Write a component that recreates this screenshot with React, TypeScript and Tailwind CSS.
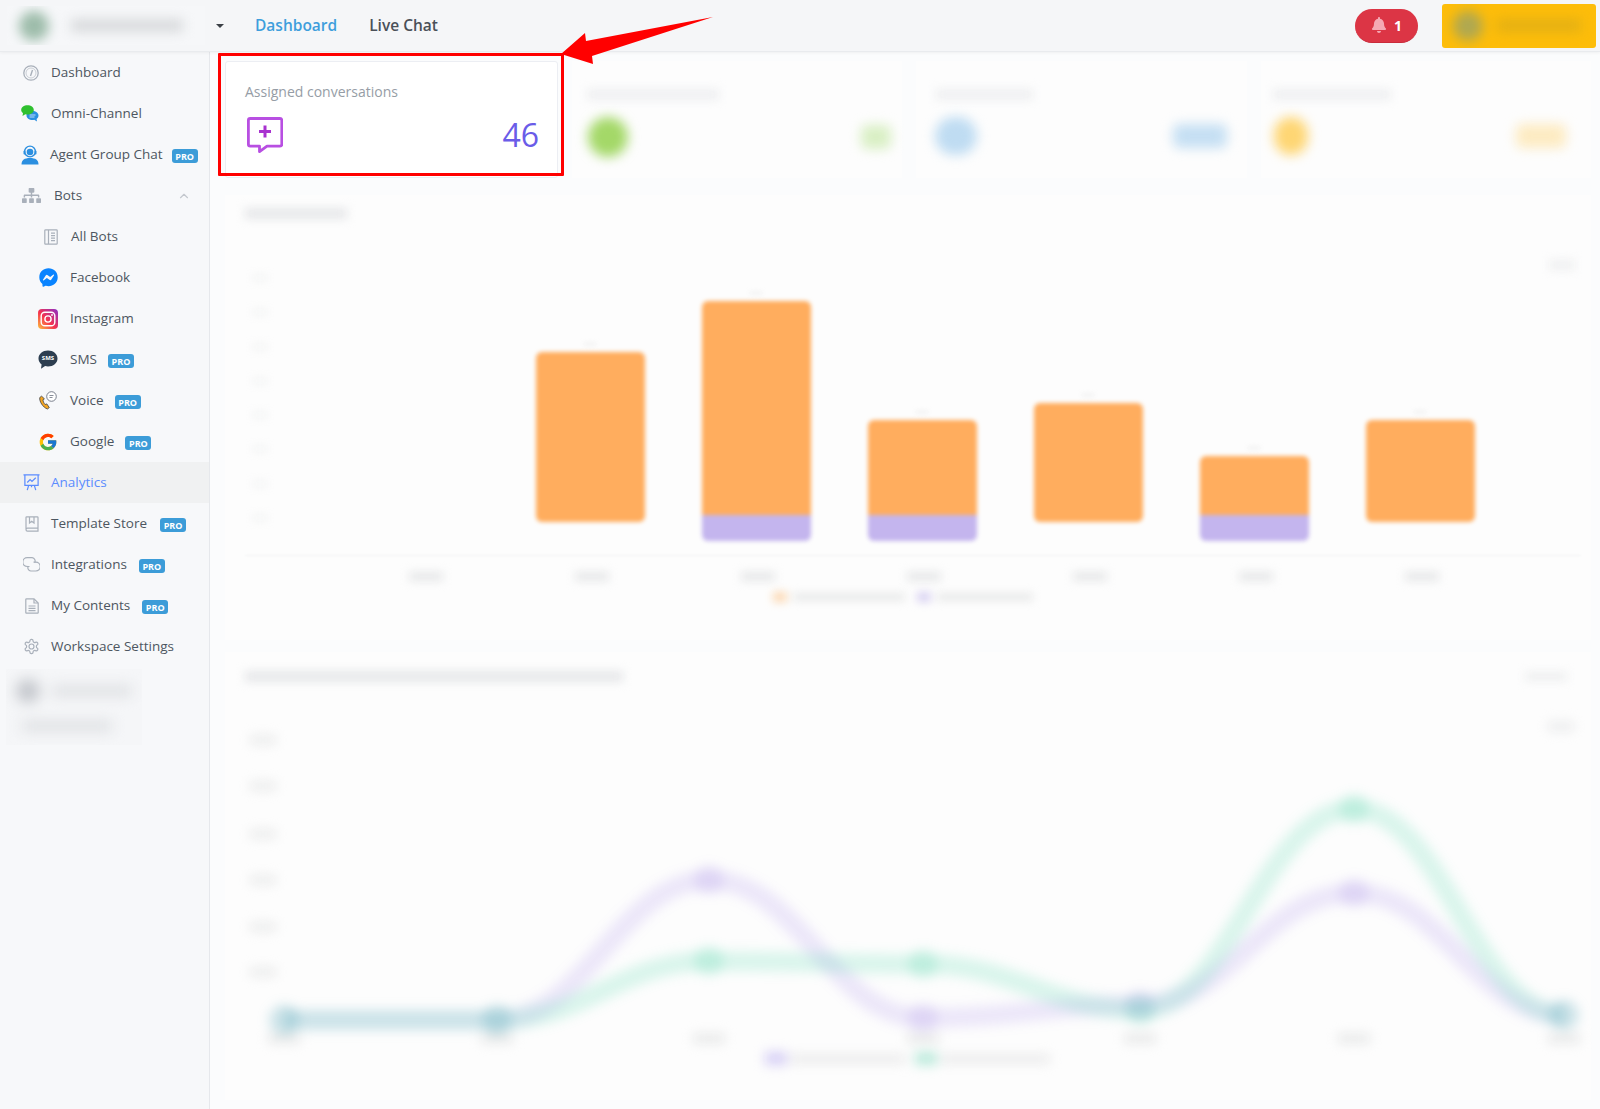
import React from "react";
import { FaFacebookMessenger, FaSitemap, FaBell } from "react-icons/fa";
import { FcGoogle } from "react-icons/fc";
import { ChevronUp } from "lucide-react";

const gray = "#a9b0ba";

const Gauge = () => (
  <svg width="16" height="16" viewBox="0 0 16 16" fill="none" stroke={gray} strokeWidth="1.3">
    <circle cx="8" cy="8" r="7.2" />
    <circle cx="8" cy="8" r="5" strokeWidth="0.6" />
    <path d="M7.5 11 L9.5 5" strokeWidth="1.4" />
  </svg>
);
const Omni = () => (
  <svg width="18" height="17" viewBox="0 0 18 17">
    <path d="M11.500 6c3.400 0 6 1.900 6 4.500 0 1.400-.7 2.600-1.900 3.400l.4 2.500-2.800-1.600c-.5.100-1.100.2-1.700.2-3.400 0-6-2-6-4.500S8.100 6 11.500 6z" fill="#2b8fe0" />
    <path d="M8.500 10h6M8.500 12h5" stroke="#fff" strokeWidth="0.7" />
    <path d="M6.500 0.300c3.500 0 6.300 2 6.300 4.600s-2.800 4.600-6.300 4.600c-.8 0-1.500-.1-2.200-.3L1.500 11l.5-3C.9 7.200.2 6.100.2 4.900.2 2.300 3 0.300 6.500.3z" fill="#2fc02f" />
  </svg>
);
const Agent = () => (
  <svg width="18" height="20" viewBox="0 0 18 20">
    <circle cx="9" cy="6.500" r="5.400" fill="none" stroke="#2b8fe0" strokeWidth="1.400" />
    <circle cx="9" cy="7" r="3.300" fill="#2b8fe0" />
    <rect x="2.500" y="5.500" width="2" height="4" rx="1" fill="#2b8fe0" />
    <rect x="13.500" y="5.500" width="2" height="4" rx="1" fill="#2b8fe0" />
    <path d="M0.500 19.500c0-4.500 3-6.500 8.500-6.500s8.500 2 8.500 6.500z" fill="#2b8fe0" />
  </svg>
);
const Notebook = () => (
  <svg width="14" height="16" viewBox="0 0 14 16" fill="none" stroke={gray} strokeWidth="1.200">
    <rect x="0.800" y="0.800" width="12.400" height="14.400" rx="0.800" />
    <path d="M4.500 1v14M7 4.200h4M7 6.700h4M7 9.200h4M7 11.700h4" />
  </svg>
);
const Instagram = () => (
  <svg width="20" height="20" viewBox="0 0 20 20">
    <defs>
      <linearGradient id="ig" x1="0" y1="1" x2="1" y2="0">
        <stop offset="0" stopColor="#fdc03c" />
        <stop offset="0.45" stopColor="#f5334f" />
        <stop offset="1" stopColor="#8a2fc8" />
      </linearGradient>
    </defs>
    <rect width="20" height="20" rx="4" fill="url(#ig)" />
    <rect x="3.200" y="3.200" width="13.600" height="13.600" rx="3.600" fill="none" stroke="#fff" strokeWidth="1.400" />
    <circle cx="10" cy="10" r="3.100" fill="none" stroke="#fff" strokeWidth="1.400" />
    <circle cx="14" cy="6" r="0.900" fill="#fff" />
  </svg>
);
const Sms = () => (
  <div className="relative w-[20px] h-[20px]">
    <svg width="20" height="20" viewBox="0 0 20 20">
      <path d="M10 0.500c5.300 0 9.500 3.400 9.500 8s-4.200 8-9.500 8c-1 0-2-.1-2.900-.4L3 18.800l.6-4.300C1.600 13 .5 10.900.5 8.500c0-4.600 4.200-8 9.500-8z" fill="#2d3e50" />
    </svg>
    <span className="absolute left-0 top-[4px] w-[20px] text-center text-[6px] leading-[9px] font-bold text-white">SMS</span>
  </div>
);
const Voice = () => (
  <svg width="20" height="20" viewBox="0 0 20 20">
    <path d="M3.600 5.200 1.800 6.500c-.7 3.800 3 9.800 7.600 11.500l1.900-1.400-2.500-3.700-1.700.6c-1-1-2-3-2.200-4.700l1.500-1z" fill="#f5a623" stroke="#3a3f45" strokeWidth="0.800" />
    <circle cx="13.500" cy="5.500" r="4.800" fill="#fff" stroke="#6b7280" strokeWidth="0.900" />
    <path d="M11.500 4.500h4M11.500 6.500h3" stroke="#6b7280" strokeWidth="0.800" />
  </svg>
);
const Analytics = () => (
  <svg width="17" height="17" viewBox="0 0 18 18" fill="none" stroke="#5b8cff" strokeWidth="1.300">
    <path d="M0.500 1h17M2 1v11h14V1M6 12l-1.500 5M12 12l1.500 5M9 12v2" />
    <path d="M4.500 9l3-3 2 1.800L13.500 4" />
  </svg>
);
const Book = () => (
  <svg width="14" height="16" viewBox="0 0 14 16" fill="none" stroke={gray} strokeWidth="1.200">
    <path d="M1 13V1.500A.7.700 0 0 1 1.700.8h10.600a.7.700 0 0 1 .7.7v13.700H2.500A1.500 1.500 0 0 1 1 13.700 1.500 1.500 0 0 1 2.500 12.200H13" />
    <path d="M4.500 1v6l2.200-1.700L9 7V1" />
  </svg>
);
const Link2 = () => (
  <svg width="17" height="15" viewBox="0 0 17 15" fill="none" stroke={gray} strokeWidth="1.200">
    <path d="M6.500 9.500H4.200a3.400 3.400 0 0 1 0-8.800h5a3.400 3.400 0 0 1 2.500 5" />
    <path d="M10.500 5.200h2.300a3.400 3.400 0 0 1 0 8.800h-5a3.400 3.400 0 0 1-2.500-5" />
  </svg>
);
const Doc = () => (
  <svg width="14" height="16" viewBox="0 0 14 16" fill="none" stroke={gray} strokeWidth="1.200">
    <path d="M9 .8H1.500a.7.700 0 0 0-.7.7v13a.7.700 0 0 0 .7.7h11a.7.700 0 0 0 .7-.7V5z" />
    <path d="M9 1v4h4M3.500 8h7M3.500 10.300h7M3.500 12.600h7" />
  </svg>
);
const Gear = () => (
  <svg width="17" height="17" viewBox="0 0 24 24" fill="none" stroke={gray} strokeWidth="1.700" strokeLinejoin="round">
    <path d="M12.220 2h-.44a2 2 0 0 0-2 2v.18a2 2 0 0 1-1 1.730l-.43.25a2 2 0 0 1-2 0l-.15-.08a2 2 0 0 0-2.730.73l-.22.38a2 2 0 0 0 .73 2.730l.15.1a2 2 0 0 1 1 1.720v.51a2 2 0 0 1-1 1.740l-.15.09a2 2 0 0 0-.73 2.730l.22.38a2 2 0 0 0 2.730.73l.15-.08a2 2 0 0 1 2 0l.43.25a2 2 0 0 1 1 1.730V20a2 2 0 0 0 2 2h.44a2 2 0 0 0 2-2v-.18a2 2 0 0 1 1-1.730l.43-.25a2 2 0 0 1 2 0l.15.08a2 2 0 0 0 2.730-.73l.22-.39a2 2 0 0 0-.73-2.730l-.15-.08a2 2 0 0 1-1-1.740v-.5a2 2 0 0 1 1-1.740l.15-.09a2 2 0 0 0 .73-2.730l-.22-.38a2 2 0 0 0-2.730-.73l-.15.08a2 2 0 0 1-2 0l-.43-.25a2 2 0 0 1-1-1.730V4a2 2 0 0 0-2-2z" />
    <circle cx="12" cy="12" r="3.500" />
  </svg>
);

const Pro = ({ cls }: { cls: string }) => (
  <span className={`flex items-center justify-center w-[26px] h-[14px] mt-[3px] rounded-[3px] bg-[#3c9cd8] text-white text-[9px] font-bold leading-none ${cls}`}>PRO</span>
);

const rows = [
  { icon: <Gauge />, label: "Dashboard", box: "w-[51px] pl-[23px]" },
  { icon: <Omni />, label: "Omni-Channel", box: "w-[51px] pl-[21px]" },
  { icon: <Agent />, label: "Agent Group Chat", box: "w-[50px] pl-[21px]", pro: "ml-[9px]" },
  { icon: <FaSitemap size={19} color={gray} />, label: "Bots", box: "w-[54px] pl-[22px]", chevron: true },
  { icon: <Notebook />, label: "All Bots", box: "w-[71px] pl-[44px]" },
  { icon: <FaFacebookMessenger size={19} color="#0a84ff" />, label: "Facebook", box: "w-[70px] pl-[39px]" },
  { icon: <Instagram />, label: "Instagram", box: "w-[70px] pl-[38px]" },
  { icon: <Sms />, label: "SMS", box: "w-[70px] pl-[38px]", pro: "ml-[11px]" },
  { icon: <Voice />, label: "Voice", box: "w-[70px] pl-[38px]", pro: "ml-[11px]" },
  { icon: <FcGoogle size={20} />, label: "Google", box: "w-[70px] pl-[38px]", pro: "ml-[11px]" },
  { icon: <Analytics />, label: "Analytics", box: "w-[51px] pl-[23px]", active: true },
  { icon: <Book />, label: "Template Store", box: "w-[51px] pl-[25px]", pro: "ml-[13px]" },
  { icon: <Link2 />, label: "Integrations", box: "w-[51px] pl-[23px]", pro: "ml-[12px]" },
  { icon: <Doc />, label: "My Contents", box: "w-[51px] pl-[25px]", pro: "ml-[12px]" },
  { icon: <Gear />, label: "Workspace Settings", box: "w-[51px] pl-[23px]" },
];

const Sidebar = () => (
  <aside className="w-[210px] shrink-0 bg-[#f7f8fa] border-r border-[#e6e8ec]">
    {rows.map((r) => (
      <div key={r.label} className={`flex items-center h-[41px] ${r.active ? "bg-[#f0f1f2]" : ""}`}>
        <div className={`flex items-center shrink-0 ${r.box}`}>{r.icon}</div>
        <span className={`text-[13.5px] ${r.active ? "text-[#5b8cff]" : "text-[#4d5660]"}`}>{r.label}</span>
        {r.pro && <Pro cls={r.pro} />}
        {r.chevron && <ChevronUp size={14} color="#c4c8ce" className="ml-auto mr-[18px]" />}
      </div>
    ))}
    <div className="mt-[2px] ml-[6px] w-[136px] h-[76px] bg-[#f5f6f8] overflow-hidden">
      <div className="blur-[7px] pt-[10px] pl-[10px]">
        <div className="flex items-center gap-[12px]">
          <div className="w-[24px] h-[24px] rounded-full bg-[#c4c7cc]" />
          <div className="w-[80px] h-[10px] bg-[#dcdee1]" />
        </div>
        <div className="mt-[18px] ml-[6px] w-[90px] h-[10px] bg-[#dcdee1]" />
      </div>
    </div>
  </aside>
);

const Header = () => (
  <header className="flex items-center h-[52px] shrink-0 bg-[#f5f6f8] border-b border-[#e9ebee] shadow-[0_1px_3px_rgba(0,0,0,0.05)] relative z-10">
    <div className="ml-[7px] w-[198px] h-[39px] bg-[#f6f7f9] overflow-hidden">
      <div className="blur-[6px] flex items-center h-full pl-[12px] gap-[22px]">
        <div className="w-[30px] h-[30px] rounded-full bg-[#9dbcaa]" />
        <div className="w-[112px] h-[13px] bg-[#d8dadc]" />
      </div>
    </div>
    <div className="ml-[11px] w-0 h-0 border-x-[4px] border-x-transparent border-t-[4px] border-t-[#3b4046]" />
    <span className="ml-[31px] text-[15.5px] font-semibold text-[#3e9edc]">Dashboard</span>
    <span className="ml-[32px] text-[15.5px] font-semibold text-[#4a5058]">Live Chat</span>
    <div className="ml-auto flex items-center justify-center gap-[7px] w-[63px] h-[34px] rounded-full bg-[#dc3545] border-b border-[#c92a3a]">
      <FaBell size={16} color="#f5a9b4" />
      <span className="text-[14px] font-bold text-white">1</span>
    </div>
    <div className="ml-[24px] mr-[4px] w-[154px] h-[44px] rounded-[3px] bg-[#fdbd0a] overflow-hidden">
      <div className="blur-[6px] flex items-center h-full pl-[11px] gap-[14px]">
        <div className="w-[30px] h-[30px] rounded-full bg-[#b0a850]" />
        <div className="w-[84px] h-[13px] bg-[#e3b014]" />
      </div>
    </div>
  </header>
);

const blurCards = [
  { label: "w-[132px] ml-[15px]", icon: "bg-[#a4d868] w-[40px] h-[40px] ml-[16px]", value: "bg-[#d9efc4] w-[30px]", pr: "pr-[11px]" },
  { label: "w-[97px] ml-[20px]", icon: "bg-[#bfdcf2] w-[42px] h-[38px] ml-[19px]", value: "bg-[#c5dff3] w-[54px]", pr: "pr-[20px]" },
  { label: "w-[118px] ml-[12px]", icon: "bg-[#fed674] w-[34px] h-[38px] ml-[13px]", value: "bg-[#fdebc2] w-[50px]", pr: "pr-[25px]" },
];

const StatCards = () => (
  <div className="grid grid-cols-[333px_1fr_1fr_1fr] gap-[14px] h-[117px]">
    <div className="bg-white border border-[#eceef3] rounded-[3px] pl-[19px] pr-[18px] pt-[20px]">
      <div className="text-[14px] leading-[20px] text-[#969da6]">Assigned conversations</div>
      <div className="flex items-center justify-between mt-[15px]">
        <svg className="ml-[2px]" width="36" height="36" viewBox="0 0 36 36" fill="none" stroke="#b84fe2" strokeWidth="2.800" strokeLinejoin="round">
          <path d="M3.200 1.500h29.800a1.800 1.800 0 0 1 1.800 1.800v24a1.800 1.800 0 0 1-1.800 1.800H20l-7.500 5.500v-5.500H3.200a1.800 1.800 0 0 1-1.800-1.800v-24a1.800 1.800 0 0 1 1.800-1.800z" />
          <path d="M18 8.500v12M12 14.500h12" stroke="#a832cf" strokeWidth="3" />
        </svg>
        <span className="text-[32px] leading-[36px] text-[#6a5ce8]">46</span>
      </div>
    </div>
    {blurCards.map((c, i) => (
      <div key={i} className={`bg-[#fdfdfd] pt-[28px] ${c.pr}`}>
        <div className={`h-[11px] bg-[#eeeff1] blur-[5px] ${c.label}`} />
        <div className="flex items-center justify-between mt-[17px]">
          <div className={`rounded-full blur-[6px] ${c.icon}`} />
          <div className={`h-[24px] rounded-[6px] blur-[6px] ${c.value}`} />
        </div>
      </div>
    ))}
  </div>
);

const bars = [
  { cls: "", purple: false },
  { cls: "h-[170px] mb-[19px] rounded-[6px]", purple: false },
  { cls: "h-[214px] rounded-t-[6px]", purple: true },
  { cls: "h-[95px] rounded-t-[6px]", purple: true },
  { cls: "h-[119px] mb-[19px] rounded-[6px]", purple: false },
  { cls: "h-[59px] rounded-t-[6px]", purple: true },
  { cls: "h-[102px] mb-[19px] rounded-[6px]", purple: false },
];

const BarCard = () => (
  <section className="mt-[17px] h-[445px] bg-[#fdfdfd] pt-[13px]">
    <div className="ml-[20px] w-[102px] h-[11px] bg-[#e6e7e9] blur-[5px]" />
    <div className="flex justify-end mt-[41px] mr-[16px]">
      <div className="w-[26px] h-[10px] bg-[#eff0f1] blur-[5px]" />
    </div>
    <div className="flex items-end h-[270px] mt-[1px]">
      <div className="ml-[28px] mb-[20px] w-[14px] h-[246px] flex flex-col justify-between blur-[5px]">
        {[0, 1, 2, 3, 4, 5, 6, 7].map((n) => (
          <div key={n} className="h-[6px] w-[14px] bg-[#f2f3f4]" />
        ))}
      </div>
      <div className="ml-[74px] w-[1162px] grid grid-cols-7 items-end gap-0">
        {bars.map((b, i) => (
          <div key={i} className="flex flex-col items-center blur-[2px]">
            {b.cls && <div className="w-[12px] h-[4px] bg-[#f3f3f3] mb-[6px]" />}
            {b.cls && <div className={`w-[109px] bg-[#ffad5e] ${b.cls}`} />}
            {b.purple && <div className="w-[109px] h-[26px] bg-[#c4b5ee] rounded-b-[6px]" />}
          </div>
        ))}
      </div>
    </div>
    <div className="mt-[14px] ml-[20px] mr-[10px] h-px bg-[#f3f4f5] blur-[1px]" />
    <div className="ml-[118px] w-[1162px] grid grid-cols-7 mt-[16px]">
      {bars.map((_, i) => (
        <div key={i} className="flex justify-center">
          <div className="w-[34px] h-[9px] bg-[#e6e7e8] blur-[5px]" />
        </div>
      ))}
    </div>
    <div className="flex items-center ml-[548px] mt-[11px] gap-[6px] blur-[4px]">
      <div className="w-[14px] h-[10px] bg-[#fcd9b4]" />
      <div className="w-[112px] h-[8px] bg-[#e9eaea]" />
      <div className="w-[14px] h-[10px] bg-[#d9d2f2] ml-[6px]" />
      <div className="w-[96px] h-[8px] bg-[#e9eaea]" />
    </div>
  </section>
);

const xs = [284, 497, 709, 923, 1140, 1354, 1564];
const purple = [1020, 1020, 880, 1018, 1005, 893, 1015];
const green = [1020, 1020, 961, 964, 1010, 809, 1015];
const pathOf = (ys: number[]) =>
  ys.reduce((d, y, i) => {
    if (i === 0) return `M${xs[0]} ${y}`;
    const mid = (xs[i] - xs[i - 1]) * 0.42;
    return `${d} C${xs[i - 1] + mid} ${ys[i - 1]} ${xs[i] - mid} ${y} ${xs[i]} ${y}`;
  }, "");

const LineCard = () => (
  <section className="mt-[12px] h-[448px] bg-[#fdfdfd] pt-[19px]">
    <div className="flex items-center justify-between pl-[20px] pr-[24px]">
      <div className="w-[378px] h-[11px] bg-[#e6e7e9] blur-[5px]" />
      <div className="w-[42px] h-[9px] bg-[#eeeff0] blur-[5px]" />
    </div>
    <svg viewBox="225 700 1366 395" className="block w-[1366px] h-[395px] mt-[18px] blur-[6px]">
      {[740, 786, 834, 880, 927, 972].map((y) => (
        <rect key={y} x="250" y={y - 4} width="26" height="8" fill="#e8e9e9" />
      ))}
      <rect x="1548" y="722" width="26" height="9" fill="#eaebec" />
      {xs.map((x) => (
        <rect key={x} x={x - 16} y="1034" width="32" height="9" fill="#e6e7e7" />
      ))}
      <path d={pathOf(purple)} fill="none" stroke="#7a58e0" strokeOpacity="0.13" strokeWidth="20" />
      <path d={pathOf(green)} fill="none" stroke="#2fcf9c" strokeOpacity="0.17" strokeWidth="20" />
      {xs.map((x, i) => (
        <g key={x}>
          <circle cx={x} cy={purple[i]} r="15" fill="#7a58e0" fillOpacity="0.12" />
          <circle cx={x} cy={green[i]} r="15" fill="#2fcf9c" fillOpacity="0.16" />
        </g>
      ))}
      <rect x="765" y="1052" width="22" height="13" fill="#d6cff5" />
      <rect x="790" y="1055" width="115" height="8" fill="#e8e8e9" />
      <rect x="915" y="1052" width="22" height="13" fill="#b9e9da" />
      <rect x="940" y="1055" width="110" height="8" fill="#e8e8e9" />
    </svg>
  </section>
);

export default function App() {
  return (
    <div className="relative h-[1109px] w-[1600px] overflow-hidden flex flex-col bg-[#fbfcfd] font-['Open_Sans',sans-serif]">
      <Header />
      <div className="flex flex-1 min-h-0">
        <Sidebar />
        <main className="flex-1 pl-[15px] pr-[9px] pt-[9px]">
          <StatCards />
          <BarCard />
          <LineCard />
        </main>
      </div>
      <div className="absolute left-[218px] top-[53px] w-[346px] h-[123px] border-[3px] border-[#ff0000] rounded-[1px] z-20 pointer-events-none" />
      <svg className="absolute left-[555px] top-[10px] z-20" width="165" height="60" viewBox="555 10 165 60">
        <polygon points="561,54 585,33 586,41 713,17 592,56 593,64" fill="#ff0000" />
      </svg>
    </div>
  );
}
